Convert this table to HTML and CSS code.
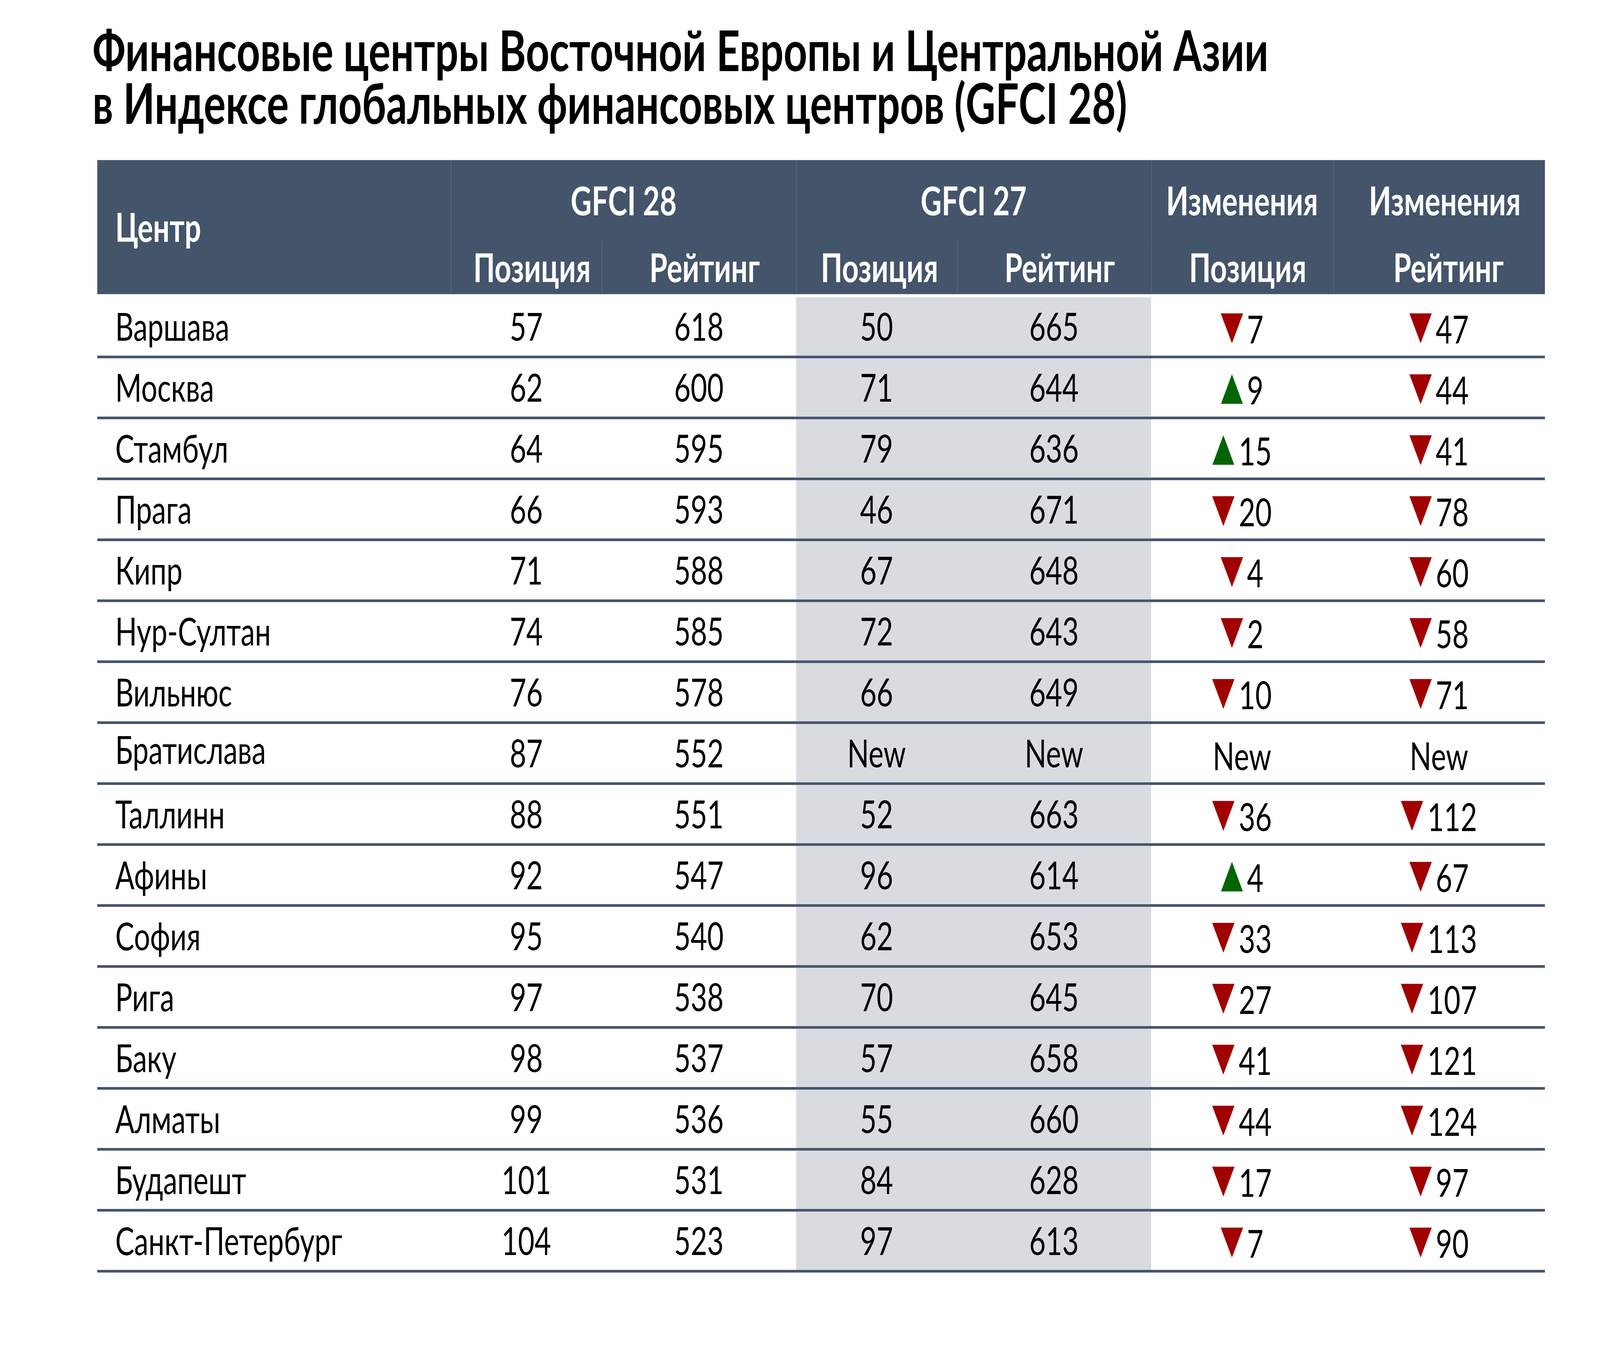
FILE: index.html
```html
<!DOCTYPE html>
<html lang="ru">
<head>
<meta charset="utf-8">
<title>Финансовые центры Восточной Европы и Центральной Азии</title>
<link rel="stylesheet" href="styles.css">
</head>
<body>
<svg width="0" height="0" class="defs" aria-hidden="true">
  <defs>
    <symbol id="down" viewBox="0 0 78 77"><polygon points="0,0 78,0 39,77"/></symbol>
    <symbol id="up" viewBox="0 0 78 78"><polygon points="39,0 78,78 0,78"/></symbol>
  </defs>
</svg>
<div class="page">
  <h1 class="title"><span class="tline">Финансовые центры Восточной Европы и Центральной Азии</span><span class="tline">в Индексе глобальных финансовых центров (GFCI 28)</span></h1>

  <div class="table">
    <div class="head">
      <div class="hc h-name">Центр</div>
      <div class="hc h-g28 div">GFCI 28</div>
      <div class="hc h-g27 div">GFCI 27</div>
      <div class="hc h-c1 div">Изменения</div>
      <div class="hc h-c2 div">Изменения</div>
      <div class="hc sub c2 div">Позиция</div>
      <div class="hc sub c3 div">Рейтинг</div>
      <div class="hc sub c4 div">Позиция</div>
      <div class="hc sub c5 div">Рейтинг</div>
      <div class="hc sub c6 div">Позиция</div>
      <div class="hc sub c7 div">Рейтинг</div>
    </div>

    <div class="body">
      <div class="row"><div class="cell name">Варшава</div><div class="cell">57</div><div class="cell">618</div><div class="cell grey">50</div><div class="cell grey">665</div><div class="cell chg"><svg class="tri dn"><use href="#down"/></svg>7</div><div class="cell chg"><svg class="tri dn"><use href="#down"/></svg>47</div></div>
      <div class="row"><div class="cell name">Москва</div><div class="cell">62</div><div class="cell">600</div><div class="cell grey">71</div><div class="cell grey">644</div><div class="cell chg"><svg class="tri upw"><use href="#up"/></svg>9</div><div class="cell chg"><svg class="tri dn"><use href="#down"/></svg>44</div></div>
      <div class="row"><div class="cell name">Стамбул</div><div class="cell">64</div><div class="cell">595</div><div class="cell grey">79</div><div class="cell grey">636</div><div class="cell chg"><svg class="tri upw"><use href="#up"/></svg>15</div><div class="cell chg"><svg class="tri dn"><use href="#down"/></svg>41</div></div>
      <div class="row"><div class="cell name">Прага</div><div class="cell">66</div><div class="cell">593</div><div class="cell grey">46</div><div class="cell grey">671</div><div class="cell chg"><svg class="tri dn"><use href="#down"/></svg>20</div><div class="cell chg"><svg class="tri dn"><use href="#down"/></svg>78</div></div>
      <div class="row"><div class="cell name">Кипр</div><div class="cell">71</div><div class="cell">588</div><div class="cell grey">67</div><div class="cell grey">648</div><div class="cell chg"><svg class="tri dn"><use href="#down"/></svg>4</div><div class="cell chg"><svg class="tri dn"><use href="#down"/></svg>60</div></div>
      <div class="row"><div class="cell name">Нур-Султан</div><div class="cell">74</div><div class="cell">585</div><div class="cell grey">72</div><div class="cell grey">643</div><div class="cell chg"><svg class="tri dn"><use href="#down"/></svg>2</div><div class="cell chg"><svg class="tri dn"><use href="#down"/></svg>58</div></div>
      <div class="row"><div class="cell name">Вильнюс</div><div class="cell">76</div><div class="cell">578</div><div class="cell grey">66</div><div class="cell grey">649</div><div class="cell chg"><svg class="tri dn"><use href="#down"/></svg>10</div><div class="cell chg"><svg class="tri dn"><use href="#down"/></svg>71</div></div>
      <div class="row"><div class="cell name raised">Братислава</div><div class="cell">87</div><div class="cell">552</div><div class="cell grey">New</div><div class="cell grey">New</div><div class="cell chg">New</div><div class="cell chg">New</div></div>
      <div class="row"><div class="cell name">Таллинн</div><div class="cell">88</div><div class="cell">551</div><div class="cell grey">52</div><div class="cell grey">663</div><div class="cell chg"><svg class="tri dn"><use href="#down"/></svg>36</div><div class="cell chg"><svg class="tri dn"><use href="#down"/></svg>112</div></div>
      <div class="row"><div class="cell name">Афины</div><div class="cell">92</div><div class="cell">547</div><div class="cell grey">96</div><div class="cell grey">614</div><div class="cell chg"><svg class="tri upw"><use href="#up"/></svg>4</div><div class="cell chg"><svg class="tri dn"><use href="#down"/></svg>67</div></div>
      <div class="row"><div class="cell name">София</div><div class="cell">95</div><div class="cell">540</div><div class="cell grey">62</div><div class="cell grey">653</div><div class="cell chg"><svg class="tri dn"><use href="#down"/></svg>33</div><div class="cell chg"><svg class="tri dn"><use href="#down"/></svg>113</div></div>
      <div class="row"><div class="cell name">Рига</div><div class="cell">97</div><div class="cell">538</div><div class="cell grey">70</div><div class="cell grey">645</div><div class="cell chg"><svg class="tri dn"><use href="#down"/></svg>27</div><div class="cell chg"><svg class="tri dn"><use href="#down"/></svg>107</div></div>
      <div class="row"><div class="cell name">Баку</div><div class="cell">98</div><div class="cell">537</div><div class="cell grey">57</div><div class="cell grey">658</div><div class="cell chg"><svg class="tri dn"><use href="#down"/></svg>41</div><div class="cell chg"><svg class="tri dn"><use href="#down"/></svg>121</div></div>
      <div class="row"><div class="cell name">Алматы</div><div class="cell">99</div><div class="cell">536</div><div class="cell grey">55</div><div class="cell grey">660</div><div class="cell chg"><svg class="tri dn"><use href="#down"/></svg>44</div><div class="cell chg"><svg class="tri dn"><use href="#down"/></svg>124</div></div>
      <div class="row"><div class="cell name">Будапешт</div><div class="cell">101</div><div class="cell">531</div><div class="cell grey">84</div><div class="cell grey">628</div><div class="cell chg"><svg class="tri dn"><use href="#down"/></svg>17</div><div class="cell chg"><svg class="tri dn"><use href="#down"/></svg>97</div></div>
      <div class="row"><div class="cell name">Санкт-Петербург</div><div class="cell">104</div><div class="cell">523</div><div class="cell grey">97</div><div class="cell grey">613</div><div class="cell chg"><svg class="tri dn"><use href="#down"/></svg>7</div><div class="cell chg"><svg class="tri dn"><use href="#down"/></svg>90</div></div>
    </div>
  </div>
</div>
</body>
</html>
```

FILE: styles.css
```css
/* One design unit = 1/5556 of the window width. */
:root {
  --u: calc(100vw / 5556);
  --cols: calc(1228 * var(--u)) calc(523 * var(--u)) calc(676 * var(--u)) calc(558 * var(--u)) calc(674 * var(--u)) calc(632 * var(--u)) calc(736 * var(--u));
  --slate: #44546a;
  --divider: #5a697e;
  --grey: #d8dbe0;
}

html {
  overflow: hidden;
  background: #ffffff;
}

body {
  margin: 0;
  padding: 0;
  min-height: 3400px;
  background: #ffffff;
}

.defs {
  position: absolute;
  width: 0;
  height: 0;
  overflow: hidden;
}

/* Fit the 5556 x 3473 design to the window: width via --u, height via scaleY. */
.page {
  font-family: Lato, "Noto Sans", "DejaVu Sans", sans-serif;
  color: #000;
  transform-origin: 0 0;
  transform: scaleY(1.356445);
  transform: scaleY(tan(atan2(5556px, 100vw)));
}

.title {
  margin: 0;
  padding: calc(58 * var(--u)) 0 0 calc(321 * var(--u));
  font-family: Lato, "Noto Sans", sans-serif;
  font-weight: 700;
  font-size: calc(143 * var(--u));
  line-height: calc(136 * var(--u));
  color: #000;
  white-space: nowrap;
}

.tline {
  display: block;
  height: calc(136 * var(--u));
}

.table {
  margin: calc(80 * var(--u)) 0 0 calc(338 * var(--u));
  width: calc(5027 * var(--u));
}

.head {
  display: grid;
  grid-template-columns: var(--cols);
  grid-template-rows: calc(206 * var(--u)) calc(137 * var(--u));
  background: var(--slate);
  color: #fff;
  font-weight: 700;
  font-size: calc(101 * var(--u));
  line-height: 1;
}

.hc {
  display: flex;
  align-items: center;
  justify-content: center;
  white-space: nowrap;
}

.hc.div {
  box-shadow: inset calc(2 * var(--u)) 0 0 var(--divider);
}

.h-name {
  grid-row: 1 / 3;
  grid-column: 1;
  justify-content: flex-start;
  padding-left: calc(62 * var(--u));
}
.h-g28 { grid-row: 1; grid-column: 2 / 4; }
.h-g27 { grid-row: 1; grid-column: 4 / 6; }
.h-c1 { grid-row: 1; grid-column: 6; }
.h-c2 { grid-row: 1; grid-column: 7; padding-left: calc(40 * var(--u)); }

.sub { grid-row: 2; padding-left: calc(40 * var(--u)); }
.sub.c2 { grid-column: 2; }
.sub.c3 { grid-column: 3; }
.sub.c4 { grid-column: 4; padding-left: calc(20 * var(--u)); }
.sub.c5 { grid-column: 5; }
.sub.c6 { grid-column: 6; }
.sub.c7 { grid-column: 7; padding-left: calc(66 * var(--u)); }

.body {
  margin-top: calc(8 * var(--u));
  display: flex;
  flex-direction: column;
}

.row {
  display: grid;
  grid-template-columns: var(--cols);
  height: calc(156 * var(--u));
  box-sizing: border-box;
  border-bottom: calc(7 * var(--u)) solid var(--slate);
  font-size: calc(99 * var(--u));
  line-height: 1;
}

.cell {
  display: flex;
  align-items: center;
  justify-content: center;
  white-space: nowrap;
}

.cell.name {
  justify-content: flex-start;
  padding-left: calc(62 * var(--u));
}

.cell.name.raised {
  padding-bottom: calc(20 * var(--u));
}

.cell.grey {
  background: var(--grey);
}

.cell.chg {
  padding-top: calc(12 * var(--u));
  gap: calc(14 * var(--u));
}

.tri {
  width: calc(78 * var(--u));
  height: calc(77 * var(--u));
  flex: none;
  margin-top: calc(-4 * var(--u));
}

.tri.dn { fill: #a00000; }
.tri.upw { fill: #036403; }
```
